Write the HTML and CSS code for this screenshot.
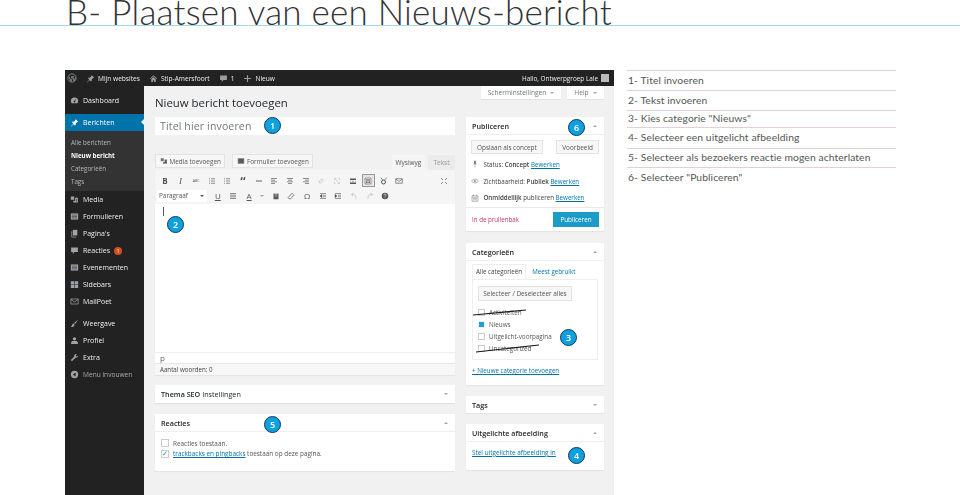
FILE: index.html
```html
<!DOCTYPE html>
<html lang="nl">
<head>
    <meta charset="UTF-8">
    <title>B- Plaatsen van een Nieuws-bericht</title>
    <link rel="stylesheet" href="styles.css">
</head>
<body>
    <svg class="defs" width="0" height="0">
        <symbol id="i-wp" viewBox="0 0 16 16"><circle cx="8" cy="8" r="6.6" fill="none" stroke="currentColor" stroke-width="1.2"/><path d="M3.5 6l3 7.5 1.6-4.6-1-3M7 5.900h4.500M9 5.900l2.400 7 2-5.500" fill="none" stroke="currentColor" stroke-width="1.2"/></symbol>
        <symbol id="i-pin" viewBox="0 0 16 16"><path d="M9.500 1.500l5 5-1.500.5-2.500 2.500-.5 3-1 1-2.500-2.500L2 15l-.5-.5 4.500-4.500-2.500-2.500 1-1 3-.5L10 3z" fill="currentColor"/></symbol>
        <symbol id="i-home" viewBox="0 0 16 16"><path d="M8 2L1.500 8l1 1L8 4l5.500 5 1-1zM4 9.500V14h3v-3h2v3h3V9.500L8 5.500z" fill="currentColor"/></symbol>
        <symbol id="i-comment" viewBox="0 0 16 16"><path d="M2 2.500h12v8H8l-3 3.500v-3.500H2z" fill="currentColor"/></symbol>
        <symbol id="i-plus" viewBox="0 0 16 16"><path d="M7 2h2v5h5v2H9v5H7V9H2V7h5z" fill="currentColor"/></symbol>
        <symbol id="i-gauge" viewBox="0 0 16 16"><path d="M8 2.500a6.500 6.500 0 0 0-6.500 6.500c0 1.700.6 3 1.500 4h10c.900-1 1.500-2.300 1.500-4A6.500 6.500 0 0 0 8 2.500zm0 9a1.500 1.500 0 0 1-.7-2.800L10.500 5 9.200 9a1.500 1.500 0 0 1-1.200 2.500z" fill="currentColor"/></symbol>
        <symbol id="i-media" viewBox="0 0 16 16"><path d="M1.500 2.500h6v6h-6zM9 5h5v8.500H6V10h3z" fill="currentColor"/><path d="M11.500 7v4.500" stroke="#222" stroke-width="1"/></symbol>
        <symbol id="i-form" viewBox="0 0 16 16"><path d="M1.500 2.500h13v11h-13z" fill="currentColor"/><path d="M3.500 5.500h9M3.500 8h9M3.500 10.500h9" stroke="#222" stroke-width=".9"/></symbol>
        <symbol id="i-page" viewBox="0 0 16 16"><path d="M5 1.500h8v10H5z" fill="currentColor"/><path d="M3 4v10.500h8" fill="none" stroke="currentColor" stroke-width="1.300"/></symbol>
        <symbol id="i-grid" viewBox="0 0 16 16"><path d="M1.500 2h6v5.500h-6zM8.500 2h6v5.500h-6zM1.500 8.500h6V14h-6zM8.500 8.500h6V14h-6z" fill="currentColor"/></symbol>
        <symbol id="i-mail" viewBox="0 0 16 16"><path d="M1.500 3.500h13v9h-13z" fill="none" stroke="currentColor" stroke-width="1.300"/><path d="M1.500 4l6.500 5 6.500-5" fill="none" stroke="currentColor" stroke-width="1.300"/></symbol>
        <symbol id="i-brush" viewBox="0 0 16 16"><path d="M14.500 1.500L7 7l2 2zM6 8c-2 0-2 2-2.500 3.500S2 13 1.500 14c3 .5 6.500-.5 6.500-4z" fill="currentColor"/></symbol>
        <symbol id="i-user" viewBox="0 0 16 16"><circle cx="8" cy="5" r="3" fill="currentColor"/><path d="M2 14v-2c0-2 2-3 3-3h6c1 0 3 1 3 3v2z" fill="currentColor"/></symbol>
        <symbol id="i-wrench" viewBox="0 0 16 16"><path d="M14.500 4.500l-2.500 2-2-2 2-2.500c-2-.7-4.500.5-4.500 3 0 .5 0 1 .2 1.300L1.500 12.500 3.500 14.500 9.700 8.300c2.500.7 5.500-1.300 4.800-3.800z" fill="currentColor"/></symbol>
        <symbol id="i-collapse" viewBox="0 0 16 16"><circle cx="8" cy="8" r="6.500" fill="currentColor"/><path d="M10 4.500v7L5 8z" fill="#222"/></symbol>
        <symbol id="i-eye" viewBox="0 0 16 16"><path d="M1 8c3-5 11-5 14 0-3 5-11 5-14 0z" fill="none" stroke="currentColor" stroke-width="1.200"/><circle cx="8" cy="8" r="2" fill="currentColor"/></symbol>
        <symbol id="i-cal" viewBox="0 0 16 16"><path d="M2 3.500h12v11H2z" fill="none" stroke="currentColor" stroke-width="1.200"/><path d="M2 6.500h12M5 1.500v3M11 1.500v3M4 9h8M4 11.500h8" stroke="currentColor" stroke-width="1.100"/></symbol>
        <symbol id="i-tack" viewBox="0 0 16 16"><path d="M5 1.500h6l-1 1v4l1.500 2h-7L6 6.500v-4zM7.500 8.500h1V15h-1z" fill="currentColor"/></symbol>
        <symbol id="i-lines" viewBox="0 0 16 16"><path d="M2 3h12M2 6.300h12M2 9.600h12M2 13h12" stroke="currentColor" stroke-width="1.300"/></symbol>
        <symbol id="i-list" viewBox="0 0 16 16"><path d="M6 3.500h8M6 8h8M6 12.500h8M2 3.500h2M2 8h2M2 12.500h2" stroke="currentColor" stroke-width="1.300"/></symbol>
        <symbol id="i-left" viewBox="0 0 16 16"><path d="M2 3h12M2 6.300h8M2 9.600h12M2 13h8" stroke="currentColor" stroke-width="1.300"/></symbol>
        <symbol id="i-center" viewBox="0 0 16 16"><path d="M2 3h12M4 6.300h8M2 9.600h12M4 13h8" stroke="currentColor" stroke-width="1.300"/></symbol>
        <symbol id="i-right" viewBox="0 0 16 16"><path d="M2 3h12M6 6.300h8M2 9.600h12M6 13h8" stroke="currentColor" stroke-width="1.300"/></symbol>
        <symbol id="i-hr" viewBox="0 0 16 16"><path d="M2 8h12" stroke="currentColor" stroke-width="1.800"/></symbol>
        <symbol id="i-link" viewBox="0 0 16 16"><path d="M9.500 3.500l3 3-6 6-3-3z" fill="none" stroke="currentColor" stroke-width="1.500"/></symbol>
        <symbol id="i-unlink" viewBox="0 0 16 16"><path d="M3 5V3h4M13 11v2H9M3 9v4h2M13 7V3h-2M3 3l10 10" fill="none" stroke="currentColor" stroke-width="1.200"/></symbol>
        <symbol id="i-more" viewBox="0 0 16 16"><path d="M2 3h12v3H2zM2 11h12v3H2z" fill="currentColor"/><path d="M2 8.500h2M6 8.500h4M12 8.500h2" stroke="currentColor"/></symbol>
        <symbol id="i-table" viewBox="0 0 16 16"><path d="M2 2h12v12H2z" fill="none" stroke="currentColor" stroke-width="1"/><path d="M4 5h8v2H4zM4 9h3v3H4zM9 9h3v3H9z" fill="currentColor"/></symbol>
        <symbol id="i-ring" viewBox="0 0 16 16"><circle cx="7" cy="10" r="4" fill="none" stroke="#444" stroke-width="1.800"/><path d="M2 1.500l3 4M13 1.500l-3 4" stroke="#2f8fc4" stroke-width="2"/></symbol>
        <symbol id="i-full" viewBox="0 0 16 16"><path d="M2 2l4 4M14 2l-4 4M2 14l4-4M14 14l-4-4" stroke="currentColor" stroke-width="1.400"/></symbol>
        <symbol id="i-paste" viewBox="0 0 16 16"><path d="M3 3h10v11.500H3z" fill="currentColor"/><path d="M6 1.500h4v3H6zM5 8h6" stroke="#f5f5f5" fill="none"/></symbol>
        <symbol id="i-eraser" viewBox="0 0 16 16"><path d="M10 2.500l4 4-7 7H4l-2-2z" fill="none" stroke="currentColor" stroke-width="1.400"/></symbol>
        <symbol id="i-outdent" viewBox="0 0 16 16"><path d="M2 3h12M8 6.500h6M8 9.500h6M2 13h12M6 5v6L2 8z" stroke="currentColor" fill="currentColor" stroke-width="1.200"/></symbol>
        <symbol id="i-indent" viewBox="0 0 16 16"><path d="M2 3h12M8 6.500h6M8 9.500h6M2 13h12M2 5v6l4-3z" stroke="currentColor" fill="currentColor" stroke-width="1.200"/></symbol>
        <symbol id="i-undo" viewBox="0 0 16 16"><path d="M3 5c5-2 9 1 9 8M3 5l4-3M3 5l3 3" fill="none" stroke="currentColor" stroke-width="1.500"/></symbol>
        <symbol id="i-redo" viewBox="0 0 16 16"><path d="M13 5C8 3 4 6 4 13M13 5L9 2M13 5l-3 3" fill="none" stroke="currentColor" stroke-width="1.500"/></symbol>
        <symbol id="i-help" viewBox="0 0 16 16"><circle cx="8" cy="8" r="6.500" fill="currentColor"/><path d="M5.800 6.500c0-3 4.400-3 4.400-.3 0 1.800-2.200 1.600-2.200 3.300M8 11v1.500" fill="none" stroke="#f5f5f5" stroke-width="1.300"/></symbol>
    </svg>

    <h1 class="page-title">B- Plaatsen van een Nieuws-bericht</h1>

    <div class="main">
        <div class="shot">
            <div class="adminbar">
                <svg class="bar-icon wp-logo"><use href="#i-wp"/></svg>
                <svg class="bar-icon"><use href="#i-pin"/></svg><span class="bar-text">Mijn websites</span>
                <svg class="bar-icon"><use href="#i-home"/></svg><span class="bar-text">Stip-Amersfoort</span>
                <svg class="bar-icon"><use href="#i-comment"/></svg><span class="bar-text">1</span>
                <svg class="bar-icon"><use href="#i-plus"/></svg><span class="bar-text">Nieuw</span>
                <span class="bar-hello">Hallo, Ontwerpgroep Lale</span>
                <span class="avatar"></span>
            </div>

            <div class="wp-body">
                <nav class="sidebar">
                    <a class="menu-item first"><svg><use href="#i-gauge"/></svg>Dashboard</a>
                    <a class="menu-item current"><svg><use href="#i-pin"/></svg>Berichten</a>
                    <div class="submenu">
                        <a>Alle berichten</a>
                        <a class="sub-active">Nieuw bericht</a>
                        <a>Categorieën</a>
                        <a>Tags</a>
                    </div>
                    <a class="menu-item"><svg><use href="#i-media"/></svg>Media</a>
                    <a class="menu-item"><svg><use href="#i-form"/></svg>Formulieren</a>
                    <a class="menu-item"><svg><use href="#i-page"/></svg>Pagina's</a>
                    <a class="menu-item"><svg><use href="#i-comment"/></svg>Reacties<span class="count">1</span></a>
                    <a class="menu-item"><svg><use href="#i-form"/></svg>Evenementen</a>
                    <a class="menu-item"><svg><use href="#i-grid"/></svg>Sidebars</a>
                    <a class="menu-item"><svg><use href="#i-mail"/></svg>MailPoet</a>
                    <a class="menu-item gap"><svg><use href="#i-brush"/></svg>Weergave</a>
                    <a class="menu-item"><svg><use href="#i-user"/></svg>Profiel</a>
                    <a class="menu-item"><svg><use href="#i-wrench"/></svg>Extra</a>
                    <a class="menu-item collapse"><svg><use href="#i-collapse"/></svg>Menu invouwen</a>
                </nav>

                <div class="content">
                    <div class="screen-tabs">
                        <span class="screen-tab wide">Scherminstellingen <i class="caret"></i></span>
                        <span class="screen-tab">Help <i class="caret"></i></span>
                    </div>
                    <div class="columns">
                        <div class="col-main">
                            <h2 class="heading">Nieuw bericht toevoegen</h2>
                            <div class="title-input">Titel hier invoeren</div>
                            <div class="media-row">
                                <span class="btn"><svg><use href="#i-media"/></svg>Media toevoegen</span>
                                <span class="btn"><svg><use href="#i-form"/></svg>Formulier toevoegen</span>
                                <span class="editor-tabs">
                                    <span class="etab on">Wysiwyg</span>
                                    <span class="etab">Tekst</span>
                                </span>
                            </div>
                            <div class="editor">
                                <div class="toolbar">
                                    <div class="tool-row">
                                        <span class="tool b">B</span>
                                        <span class="tool it">I</span>
                                        <span class="tool abc">ABC</span>
                                        <span class="tool"><svg><use href="#i-list"/></svg></span>
                                        <span class="tool"><svg><use href="#i-list"/></svg></span>
                                        <span class="tool b quote">“</span>
                                        <span class="tool"><svg><use href="#i-hr"/></svg></span>
                                        <span class="tool"><svg><use href="#i-left"/></svg></span>
                                        <span class="tool"><svg><use href="#i-center"/></svg></span>
                                        <span class="tool"><svg><use href="#i-right"/></svg></span>
                                        <span class="tool off"><svg><use href="#i-link"/></svg></span>
                                        <span class="tool off"><svg><use href="#i-unlink"/></svg></span>
                                        <span class="tool"><svg><use href="#i-more"/></svg></span>
                                        <span class="tool pressed"><svg><use href="#i-table"/></svg></span>
                                        <span class="tool"><svg><use href="#i-ring"/></svg></span>
                                        <span class="tool"><svg><use href="#i-mail"/></svg></span>
                                        <span class="tool push"><svg><use href="#i-full"/></svg></span>
                                    </div>
                                    <div class="tool-row">
                                        <span class="format">Paragraaf<i class="caret"></i></span>
                                        <span class="tool u">U</span>
                                        <span class="tool"><svg><use href="#i-lines"/></svg></span>
                                        <span class="tool u">A</span>
                                        <span class="tool mini"><i class="caret"></i></span>
                                        <span class="tool"><svg><use href="#i-paste"/></svg></span>
                                        <span class="tool"><svg><use href="#i-eraser"/></svg></span>
                                        <span class="tool">Ω</span>
                                        <span class="tool"><svg><use href="#i-outdent"/></svg></span>
                                        <span class="tool"><svg><use href="#i-indent"/></svg></span>
                                        <span class="tool off"><svg><use href="#i-undo"/></svg></span>
                                        <span class="tool off"><svg><use href="#i-redo"/></svg></span>
                                        <span class="tool"><svg><use href="#i-help"/></svg></span>
                                    </div>
                                </div>
                                <div class="edit-area"><span class="cursor"></span></div>
                                <div class="path-row">p</div>
                                <div class="word-row">Aantal woorden: 0</div>
                            </div>
                            <div class="box seo">
                                <div class="box-head"><b>Thema SEO</b>&nbsp;Instellingen<i class="caret"></i></div>
                            </div>
                            <div class="box comments">
                                <div class="box-head"><b>Reacties</b><i class="caret up"></i></div>
                                <div class="box-body">
                                    <div class="check-line"><span class="check"></span>Reacties toestaan.</div>
                                    <div class="check-line"><span class="check ticked">✓</span><a>trackbacks en pingbacks</a>&nbsp;toestaan op deze pagina.</div>
                                </div>
                            </div>
                        </div>

                        <aside class="col-side">
                            <div class="box publish">
                                <div class="box-head"><b>Publiceren</b><i class="caret up"></i></div>
                                <div class="pub-buttons">
                                    <span class="btn">Opslaan als concept</span>
                                    <span class="btn">Voorbeeld</span>
                                </div>
                                <div class="pub-line"><svg><use href="#i-tack"/></svg>Status:&nbsp;<b>Concept</b>&nbsp;<a>Bewerken</a></div>
                                <div class="pub-line"><svg><use href="#i-eye"/></svg>Zichtbaarheid:&nbsp;<b>Publiek</b>&nbsp;<a>Bewerken</a></div>
                                <div class="pub-line"><svg><use href="#i-cal"/></svg><b>Onmiddellijk</b>&nbsp;publiceren&nbsp;<a>Bewerken</a></div>
                                <div class="pub-foot">
                                    <span class="trash">In de prullenbak</span>
                                    <span class="btn-primary">Publiceren</span>
                                </div>
                            </div>
                            <div class="box cats">
                                <div class="box-head"><b>Categorieën</b><i class="caret up"></i></div>
                                <div class="cat-tabs">
                                    <span class="cat-tab on">Alle categorieën</span>
                                    <span class="cat-tab">Meest gebruikt</span>
                                </div>
                                <div class="cat-panel">
                                    <span class="btn">Selecteer / Deselecteer alles</span>
                                    <div class="cat-list">
                                        <div class="cat-line"><span class="check"></span>Activiteiten</div>
                                        <div class="cat-line"><span class="check filled"></span>Nieuws</div>
                                        <div class="cat-line"><span class="check"></span>Uitgelicht-voorpagina</div>
                                        <div class="cat-line"><span class="check"></span>Uncategorized</div>
                                    </div>
                                </div>
                                <a class="new-cat">+ Nieuwe categorie toevoegen</a>
                            </div>
                            <div class="box tags">
                                <div class="box-head"><b>Tags</b><i class="caret"></i></div>
                            </div>
                            <div class="box featured">
                                <div class="box-head"><b>Uitgelichte afbeelding</b><i class="caret up"></i></div>
                                <a class="feat-link">Stel uitgelichte afbeelding in</a>
                            </div>
                        </aside>
                    </div>
                </div>
            </div>

            <svg class="strikes" width="549" height="425">
                <path d="M408 245L461 240M411 282L474 275" stroke="#1a1a1a" stroke-width="1.200" fill="none"/>
            </svg>
            <span class="badge b1">1</span>
            <span class="badge b2">2</span>
            <span class="badge b3">3</span>
            <span class="badge b4">4</span>
            <span class="badge b5">5</span>
            <span class="badge b6">6</span>
        </div>

        <ul class="steps">
            <li>1- Titel invoeren</li>
            <li>2- Tekst invoeren</li>
            <li>3- Kies categorie "Nieuws"</li>
            <li>4- Selecteer een uitgelicht afbeelding</li>
            <li>5- Selecteer als bezoekers reactie mogen achterlaten</li>
            <li>6- Selecteer "Publiceren"</li>
        </ul>
    </div>
</body>
</html>
```

FILE: styles.css
```css
body {
    margin: 0;
    height: 495px;
    overflow: hidden;
    background: #fff;
    font-family: "Open Sans", sans-serif;
    color: #444;
}
a { color: #0073aa; }
.defs { position: absolute; }

.page-title {
    margin: 0 0 44px;
    padding-left: 66px;
    height: 25px;
    border-bottom: 1px solid #a3d8e8;
    font-family: Lato, sans-serif;
    font-weight: 300;
    font-size: 35px;
    line-height: 23px;
    letter-spacing: .22px;
    color: #333;
    white-space: nowrap;
}

.main { display: flex; }

/* the wordpress screenshot */
.shot {
    position: relative;
    width: 549px;
    height: 425px;
    margin-left: 65px;
    overflow: hidden;
    background: #f1f1f1;
    font-size: 7px;
    filter: blur(.35px);
}

.adminbar {
    display: flex;
    align-items: center;
    height: 16px;
    background: #222;
    color: #eee;
    font-size: 6.6px;
    font-weight: 400;
}
.bar-icon {
    width: 9px;
    height: 9px;
    margin: 0 3px 0 9px;
    color: #9a9ea2;
}
.wp-logo { margin: 0 0 0 2px; width: 10px; height: 10px; }
.bar-text { white-space: nowrap; }
.bar-hello { margin-left: auto; font-size: 6.4px; white-space: nowrap; }
.avatar {
    width: 8px;
    height: 8px;
    margin: 0 5px 0 3px;
    background: #bbb;
}

.wp-body { display: flex; height: 409px; }

.sidebar {
    flex: 0 0 79px;
    background: #222;
    color: #eee;
    font-size: 7px;
}
.menu-item {
    display: flex;
    align-items: center;
    height: 17px;
    color: inherit;
    white-space: nowrap;
}
.menu-item.first { margin-top: 6px; }
.menu-item svg {
    width: 9px;
    height: 9px;
    margin: 0 4.5px 0 4.5px;
    color: #9ea3a8;
}
.menu-item.current {
    position: relative;
    margin-top: 5px;
    background: #0073aa;
    color: #fff;
}
.menu-item.current svg { color: #fff; }
.menu-item.current::after {
    content: "";
    position: absolute;
    right: 0;
    top: 5px;
    border: 3.5px solid transparent;
    border-right-color: #f1f1f1;
    border-left-width: 0;
}
.menu-item.gap { margin-top: 5px; }
.menu-item.collapse { color: #aaa; font-size: 6.6px; }
.submenu {
    display: flex;
    flex-direction: column;
    height: 60px;
    padding-top: 5px;
    box-sizing: border-box;
    background: #333;
    font-size: 6.2px;
    color: #b4b9be;
}
.submenu a {
    height: 13px;
    line-height: 13px;
    padding-left: 6px;
    color: inherit;
}
.submenu .sub-active { color: #fff; font-weight: 700; }
.count {
    display: inline-block;
    width: 8px;
    height: 8px;
    margin-left: 4px;
    border-radius: 50%;
    background: #d54e21;
    color: #fff;
    font-size: 4.5px;
    line-height: 8px;
    text-align: center;
}

.content { flex: 1; padding: 0 10px 0 11px; }

.screen-tabs {
    display: flex;
    justify-content: flex-end;
    gap: 6px;
    height: 13px;
}
.screen-tab {
    display: flex;
    align-items: center;
    justify-content: center;
    gap: 4px;
    width: 37px;
    height: 13px;
    background: #fff;
    color: #72777c;
    font-size: 6.6px;
    box-shadow: 0 1px 1px rgba(0,0,0,.06);
}
.screen-tab.wide { width: 80px; }
.caret {
    display: inline-block;
    border: 2px solid transparent;
    border-top: 2.5px solid #a0a5aa;
    border-bottom: 0;
}
.caret.up {
    border-top: 0;
    border-bottom: 2.5px solid #a0a5aa;
}

.columns { display: flex; gap: 11px; }
.col-main { width: 300px; }
.col-side { width: 138px; padding-top: 18px; }

.heading {
    margin: 0;
    height: 18px;
    font-size: 11.4px;
    font-weight: 400;
    line-height: 8px;
    color: #23282d;
    white-space: nowrap;
}
.title-input {
    height: 18px;
    padding-left: 5px;
    background: #fff;
    color: #72777c;
    font-size: 10.5px;
    line-height: 18px;
    letter-spacing: .15px;
}
.media-row {
    display: flex;
    gap: 7px;
    height: 16px;
    margin-top: 19px;
}
.btn {
    display: inline-flex;
    align-items: center;
    height: 14px;
    padding: 0 3.5px;
    background: #f7f7f7;
    border: 1px solid #e3e3e3;
    box-sizing: border-box;
    color: #555;
    font-size: 6.4px;
    white-space: nowrap;
}
.btn svg { width: 8px; height: 8px; margin-right: 2px; color: #72777c; }
.editor-tabs { display: flex; gap: 3px; margin-left: auto; align-self: flex-end; }
.etab {
    width: 27px;
    height: 15px;
    background: #ebebeb;
    color: #999;
    font-size: 6.5px;
    line-height: 16px;
    text-align: center;
}
.etab.on { width: 33px; background: #f5f5f5; color: #555; }

.editor { background: #fff; box-shadow: 0 1px 1px rgba(0,0,0,.05); }
.toolbar {
    height: 34px;
    padding: 3px 2px 0;
    box-sizing: border-box;
    background: #f5f5f5;
}
.tool-row { display: flex; align-items: center; height: 15px; }
.tool {
    display: flex;
    align-items: center;
    justify-content: center;
    width: 15.65px;
    height: 13px;
    color: #555;
    font-size: 8px;
}
.tool svg { width: 8px; height: 8px; }
.tool.b { font-weight: 700; }
.tool.quote { font-size: 12px; line-height: 16px; align-items: flex-start; }
.tool.it { font-style: italic; font-family: "Liberation Serif", serif; font-size: 9px; }
.tool.abc { font-size: 3.6px; }
.tool.u { text-decoration: underline; }
.tool.off { color: #bbb; }
.tool.mini { width: 11px; }
.tool.push { margin-left: auto; margin-right: 1px; }
.tool.pressed {
    width: 13px;
    margin: 0 1.3px;
    background: #e5e5e5;
    border: 1px solid #999;
    box-sizing: border-box;
}
.format {
    display: flex;
    align-items: center;
    justify-content: space-between;
    width: 50px;
    height: 12px;
    margin-right: 3px;
    padding: 0 3px 0 2px;
    background: #fff;
    box-sizing: border-box;
    color: #555;
    font-size: 6.4px;
}
.format .caret { border-top-color: #555; }
.edit-area { height: 148px; padding: 3px 0 0 8px; box-sizing: border-box; }
.cursor { display: block; width: 1px; height: 9px; background: #555; }
.path-row {
    height: 11px;
    padding-left: 5px;
    font-size: 8px;
    line-height: 10px;
    color: #666;
    border-top: 1px solid #eee;
    box-sizing: border-box;
}
.word-row {
    height: 12px;
    padding-left: 5px;
    background: #f7f7f7;
    border-top: 1px solid #e8e8e8;
    box-sizing: border-box;
    color: #444;
    font-size: 6.2px;
    line-height: 11px;
}

.box {
    background: #fff;
    box-shadow: 0 1px 1px rgba(0,0,0,.05);
}
.box-head {
    position: relative;
    display: flex;
    align-items: center;
    height: 18px;
    padding-left: 6px;
    font-size: 7.2px;
    color: #23282d;
}
.box-head b { font-weight: 600; }
.box-head .caret { position: absolute; right: 7px; top: 8px; }
.seo { margin-top: 10px; }
.comments { height: 57px; margin-top: 11px; }
.comments .box-head { border-bottom: 1px solid #eee; box-sizing: border-box; }
.box-body { padding: 6px 6px 0; }
.check-line {
    display: flex;
    align-items: center;
    height: 10.5px;
    font-size: 6.4px;
    color: #555;
    white-space: nowrap;
}
.check {
    display: inline-block;
    flex: none;
    width: 8px;
    height: 8px;
    margin-right: 4px;
    background: #fff;
    border: 1px solid #ccc;
    box-sizing: border-box;
    font-size: 7px;
    line-height: 6px;
    color: #1e8cbe;
}
.check.filled { background: #1e9fdb; border: 1.5px solid #e8f4fa; }
.check-line a { text-decoration: underline; }

.publish { height: 114px; }
.publish .box-head, .cats .box-head, .featured .box-head {
    border-bottom: 1px solid #eee;
    box-sizing: border-box;
}
.pub-buttons {
    display: flex;
    justify-content: space-between;
    padding: 5px 5px 0;
    margin-bottom: 2px;
}
.pub-buttons .btn { padding: 0 5px; }
.pub-line {
    display: flex;
    align-items: center;
    height: 16.8px;
    padding-left: 5px;
    font-size: 6.2px;
    color: #444;
    white-space: nowrap;
}
.pub-line svg { width: 8px; height: 8px; margin-right: 4.5px; color: #82878c; }
.pub-line b { font-weight: 600; }
.pub-line a { text-decoration: underline; }
.pub-foot {
    display: flex;
    align-items: center;
    justify-content: space-between;
    height: 24px;
    margin-top: 1px;
    padding: 0 5px 0 6px;
    box-sizing: border-box;
    background: #fff;
    border-top: 1px solid #e8e8e8;
}
.trash { color: #c9385a; font-size: 6.2px; }
.btn-primary {
    width: 46px;
    height: 15px;
    background: #1b9cc7;
    color: #fff;
    font-size: 6.3px;
    line-height: 15px;
    text-align: center;
}

.cats { height: 142px; margin-top: 12px; }
.cat-tabs { display: flex; padding: 3px 0 0 6px; height: 15px; }
.cat-tab {
    padding: 0 3px;
    color: #0073aa;
    font-size: 6.2px;
    line-height: 15px;
    white-space: nowrap;
}
.cat-tab.on {
    margin-right: 3px;
    color: #444;
    border: 1px solid #eee;
    border-bottom: 0;
    background: #fff;
    line-height: 14px;
}
.cat-panel {
    height: 81px;
    margin: 0 6px;
    padding: 6px 5px 0;
    border: 1px solid #eee;
    box-sizing: border-box;
}
.cat-panel .btn { height: 15px; width: 94px; justify-content: center; padding: 0; }
.cat-list { margin-top: 6px; }
.cat-line {
    display: flex;
    align-items: center;
    height: 11.8px;
    font-size: 6.3px;
    color: #555;
    white-space: nowrap;
}
.cat-line .check { width: 7px; height: 7px; margin-right: 4px; }
.new-cat {
    display: block;
    margin: 6px 0 0 6px;
    font-size: 6.2px;
    text-decoration: underline;
}
.tags { margin-top: 11px; height: 17px; }
.featured { margin-top: 11px; height: 46px; }
.feat-link {
    display: block;
    margin: 6px 0 0 6px;
    font-size: 6.4px;
    text-decoration: underline;
}

/* pen strikes and the numbered markers lie over the screenshot */
.strikes { position: absolute; left: 0; top: 0; }
.badge {
    position: absolute;
    width: 17px;
    height: 17px;
    border: 1px solid #123a55;
    border-radius: 50%;
    box-sizing: border-box;
    background: #0fa0e0;
    color: #fff;
    font-size: 9px;
    font-weight: 600;
    line-height: 15px;
    text-align: center;
}
.b1 { left: 199px; top: 47px; }
.b2 { left: 102px; top: 146px; }
.b3 { left: 495px; top: 259px; }
.b4 { left: 503px; top: 377px; }
.b5 { left: 199px; top: 346px; }
.b6 { left: 503px; top: 49px; }

/* numbered list on the right */
.steps {
    width: 269px;
    margin: 0 0 0 13px;
    padding: 0;
    list-style: none;
    font-family: Lato, sans-serif;
    font-size: 10.3px;
    letter-spacing: .1px;
    color: #555;
}
.steps li {
    display: flex;
    align-items: center;
    height: 20px;
    padding: 0 0 2px 1px;
    border-top: 1px solid #e2cfda;
    box-sizing: border-box;
    white-space: nowrap;
}
.steps li:nth-child(3) { height: 17px; }
.steps li:nth-child(4) { height: 21px; }
.steps li:nth-child(5) { height: 19px; }
```
